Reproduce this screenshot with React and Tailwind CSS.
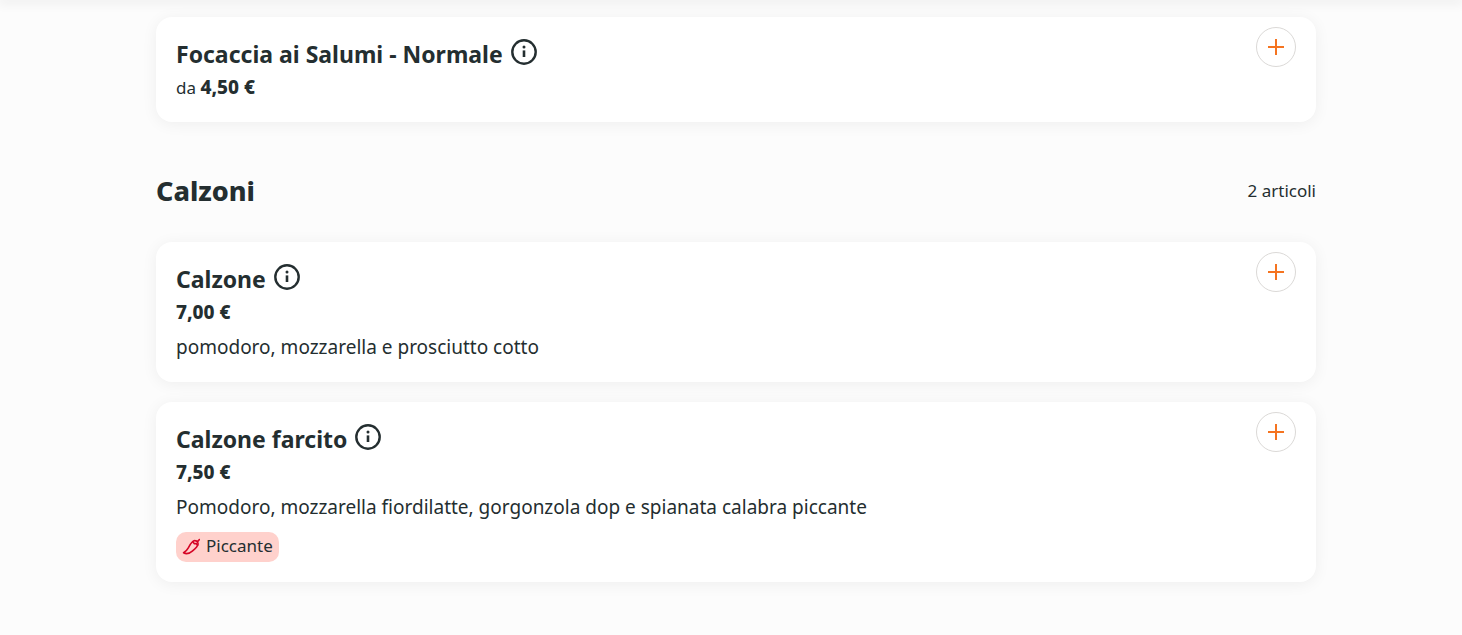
const sections = [
  {
    items: [{ name: 'Focaccia ai Salumi - Normale', prefix: 'da', price: '4,50 €' }],
  },
  {
    title: 'Calzoni',
    count: '2 articoli',
    items: [
      { name: 'Calzone', price: '7,00 €', description: 'pomodoro, mozzarella e prosciutto cotto' },
      {
        name: 'Calzone farcito',
        price: '7,50 €',
        description: 'Pomodoro, mozzarella fiordilatte, gorgonzola dop e spianata calabra piccante',
        tag: 'Piccante',
      },
    ],
  },
];

function InfoIcon() {
  return (
    <svg className="size-[26px]" viewBox="0 0 26 26" fill="none" aria-hidden="true">
      <circle cx="13" cy="13" r="11.7" stroke="currentColor" strokeWidth="2.4" />
      <circle cx="13" cy="7.9" r="1.5" fill="currentColor" />
      <path d="M13 11.4V18" stroke="currentColor" strokeWidth="2.6" />
    </svg>
  );
}

function PlusIcon() {
  return (
    <svg className="size-4" viewBox="0 0 16 16" fill="none" aria-hidden="true">
      <path d="M8 0V16M0 8H16" stroke="currentColor" strokeWidth="2" />
    </svg>
  );
}

function ChiliIcon() {
  return (
    <svg className="size-[18px]" viewBox="0 0 18 18" fill="none" stroke="currentColor" strokeWidth="1.6" strokeLinejoin="round" strokeLinecap="round" aria-hidden="true">
      <path d="M10.2 4C8.4 5.8 7.6 7.6 6.5 9.6C5.2 11.9 3.6 13.6 1.6 14.8C4.2 16.4 7.6 15.4 10.3 13.1C12.9 10.9 15.6 8.8 16 6.4C16.2 4.9 15.6 3.6 14.3 3C12.9 2.4 11.3 2.8 10.2 4Z" />
      <path d="M10.8 3.8L12.4 5.8L14.2 5.6L15.6 7.2" />
      <path d="M14.6 3.4C15.8 3.4 16.8 2.8 17.3 1.6" />
    </svg>
  );
}

function MenuItem({ item }) {
  return (
    <li className="flex items-start justify-between rounded-2xl bg-white px-5 pb-5 shadow-[0_2px_16px_rgba(0,0,0,0.06)]">
      <div className="min-w-0 pt-5">
        <div className="flex h-9 items-start gap-2">
          <h3 className="text-[23px] leading-[34px] font-bold">{item.name}</h3>
          <button type="button" aria-label={`Informazioni su ${item.name}`} className="mt-0.5">
            <InfoIcon />
          </button>
        </div>
        <p className="text-[17px] leading-[29px]">
          {item.prefix && <span>{item.prefix} </span>}
          <span className="text-[19px] leading-[28px] font-extrabold">{item.price}</span>
        </p>
        {item.description && <p className="mt-1.5 text-[19px] leading-[29px]">{item.description}</p>}
        {item.tag && (
          <span className="mt-2.5 flex h-[30px] w-fit items-center gap-1.5 rounded-[10px] bg-[#ffd1cc] px-1.5 text-[17px] leading-7">
            <span className="text-[#d50525]">
              <ChiliIcon />
            </span>
            <span className="pb-0.5">{item.tag}</span>
          </span>
        )}
      </div>
      <button
        type="button"
        aria-label={`Aggiungi ${item.name}`}
        className="mt-2.5 flex size-10 shrink-0 items-center justify-center rounded-full border border-[#dbd9d7] bg-white text-[#f57420]"
      >
        <PlusIcon />
      </button>
    </li>
  );
}

export default function App() {
  return (
    <div className="min-h-screen bg-[#fcfcfc] font-['Noto_Sans',sans-serif] text-[#242e30]">
      <header className="h-0 shadow-[0_0_12px_2px_rgba(0,0,0,0.12)]" />
      <main className="pt-[17px] pb-[53px] pl-2.5">
        <div className="mx-auto flex max-w-[1160px] flex-col gap-12">
          {sections.map((section, index) => (
            <section key={index}>
              {section.title && (
                <div className="mb-[30px] flex h-[42px] items-center justify-between">
                  <h2 className="text-[27px] leading-9 font-extrabold">{section.title}</h2>
                  <p className="text-[17px] leading-6">{section.count}</p>
                </div>
              )}
              <ul className="flex flex-col gap-5">
                {section.items.map((item) => (
                  <MenuItem key={item.name} item={item} />
                ))}
              </ul>
            </section>
          ))}
        </div>
      </main>
    </div>
  );
}
